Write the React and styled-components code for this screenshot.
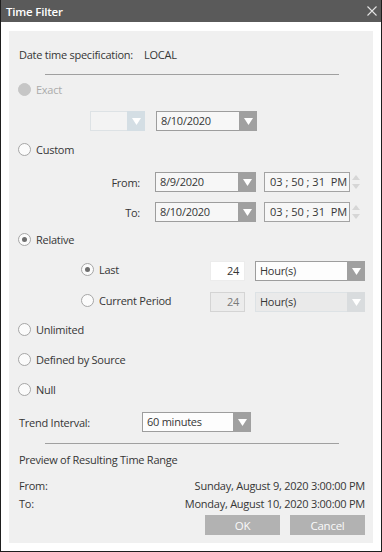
import React from 'react';
import styled, { createGlobalStyle, css } from 'styled-components';

const Global = createGlobalStyle`
  html, body { margin: 0; padding: 0; background: #fff; }
  body {
    font-family: "Open Sans", "Noto Sans", sans-serif;
    font-size: 11px;
    letter-spacing: -0.25px;
    color: #363636;
  }
`;

const Window = styled.div`
  width: 382px;
  height: 552px;
  box-sizing: border-box;
  border: 1px solid #1e1e1e;
  border-top: none;
  background: #fff;
  display: flex;
  flex-direction: column;
`;

const TitleBar = styled.div`
  height: 22px;
  flex: none;
  background: #5a5a5a;
  color: #fff;
  display: flex;
  align-items: center;
  justify-content: space-between;
  padding: 0 4px 0 5px;
  font-size: 11.5px;
  font-weight: 600;
  letter-spacing: -0.2px;
`;

const Body = styled.div`
  flex: 1;
  padding: 9px 9px 8px 8px;
  display: flex;
`;

const Panel = styled.div`
  flex: 1;
  background: #f0f0f0;
  padding: 0 8px 0 9px;
  display: flex;
  flex-direction: column;
`;

const Row = styled.div`
  height: ${p => p.$h}px;
  flex: none;
  display: flex;
  align-items: center;
  padding-left: ${p => p.$indent || 0}px;
  gap: ${p => p.$gap || 0}px;
  justify-content: ${p => p.$justify || 'flex-start'};
  margin-top: ${p => p.$mt || 0}px;
`;

const Separator = styled.div`
  width: 294px;
  height: 1px;
  background: #a0a0a0;
  align-self: center;
  flex: none;
  margin-top: ${p => p.$mt || 0}px;
`;

const Text = styled.span`
  color: ${p => (p.$disabled ? '#ababab' : '#363636')};
  white-space: nowrap;
`;

const Label = styled.span`
  width: ${p => p.$w}px;
  text-align: ${p => p.$align || 'left'};
  box-sizing: border-box;
  flex: none;
  white-space: nowrap;
`;

const RadioWrap = styled.label`
  display: flex;
  align-items: center;
  gap: 5px;
  width: ${p => (p.$w ? `${p.$w}px` : 'auto')};
  margin-bottom: ${p => p.$lift || 0}px;
  flex: none;
`;

const RadioCircle = styled.span`
  width: 13px;
  height: 13px;
  border-radius: 50%;
  box-sizing: border-box;
  border: 1px solid ${p => (p.$disabled ? '#c6c6c6' : '#a6a6a6')};
  background: ${p => (p.$disabled ? '#c6c6c6' : '#fbfbfb')};
  position: relative;
  flex: none;
  ${p =>
    p.$checked &&
    css`
      &::after {
        content: '';
        position: absolute;
        left: 3px;
        top: 3px;
        width: 5px;
        height: 5px;
        border-radius: 50%;
        background: #6e6e6e;
      }
    `}
`;

const comboBg = {
  normal: '#f7f7f7',
  white: '#fdfdfd',
  empty: '#f3f3f3',
  disabled: '#eaeaea',
};

const Combo = styled.div`
  width: ${p => p.$w}px;
  height: 20px;
  box-sizing: border-box;
  border: 1px solid ${p => (p.$variant === 'empty' || p.$variant === 'disabled' ? '#dde2e5' : '#9d9d9d')};
  background: ${p => comboBg[p.$variant]};
  display: flex;
  flex: none;
`;

const ComboText = styled.span`
  flex: 1;
  padding-left: 4px;
  line-height: 18px;
  color: #363636;
  white-space: nowrap;
  overflow: hidden;
`;

const ComboArrow = styled.span`
  width: 18px;
  flex: none;
  margin: -1px -1px -1px 0;
  background: ${p =>
    p.$variant === 'empty' ? '#d4dee4' : p.$variant === 'disabled' ? '#d9dcde' : '#a0a0a0'};
  display: flex;
  align-items: center;
  justify-content: center;
`;

const NumBox = styled.div`
  width: 35px;
  height: 20px;
  box-sizing: border-box;
  border: 1px solid ${p => (p.$disabled ? '#d4d4d4' : '#ececec')};
  background: ${p => (p.$disabled ? '#ececec' : '#ffffff')};
  color: ${p => (p.$disabled ? '#7a7a7a' : '#363636')};
  text-align: right;
  padding-right: 5px;
  line-height: 18px;
  flex: none;
`;

const TimeBox = styled.div`
  width: 86px;
  height: 20px;
  box-sizing: border-box;
  border: 1px solid #a3a3a3;
  background: #f7f7f7;
  padding-left: 5px;
  line-height: 18px;
  letter-spacing: 0;
  white-space: pre;
  flex: none;
`;

const Spinner = styled.div`
  display: flex;
  flex-direction: column;
  gap: 4px;
  flex: none;
`;

const Button = styled.button`
  width: 75px;
  height: 20px;
  border: none;
  background: #b2b2b2;
  color: #fafafa;
  font-family: inherit;
  font-size: 11.5px;
  letter-spacing: inherit;
  padding: 0;
`;

const Triangle = ({ color = '#fff', up = false, w = 9, h = 7 }) => (
  <svg width={w} height={h} viewBox="0 0 10 7" preserveAspectRatio="none">
    <path d={up ? 'M0 7 L5 0 L10 7 Z' : 'M0 0 L10 0 L5 7 Z'} fill={color} />
  </svg>
);

const Radio = ({ label, checked, disabled, w, lift }) => (
  <RadioWrap $w={w} $lift={lift}>
    <RadioCircle $checked={checked} $disabled={disabled} />
    <Text $disabled={disabled}>{label}</Text>
  </RadioWrap>
);

const Dropdown = ({ value, w, variant = 'normal' }) => (
  <Combo $w={w} $variant={variant}>
    <ComboText>{value}</ComboText>
    <ComboArrow $variant={variant}>
      <Triangle />
    </ComboArrow>
  </Combo>
);

const Time = () => (
  <>
    <TimeBox>{'03 ; 50 ; 31  PM'}</TimeBox>
    <Spinner>
      <Triangle up color="#d6d6d6" w={8} h={5} />
      <Triangle color="#d6d6d6" w={8} h={5} />
    </Spinner>
  </>
);

export default function App() {
  return (
    <>
      <Global />
      <Window>
        <TitleBar>
          <span>Time Filter</span>
          <svg width="10" height="10" viewBox="0 0 10 10">
            <path d="M0.5 0.5 L9.5 9.5 M9.5 0.5 L0.5 9.5" stroke="#e4e4e4" strokeWidth="1.1" />
          </svg>
        </TitleBar>
        <Body>
          <Panel>
            <Row $h={16} $mt={15} $indent={1}>
              <Label $w={125}>Date time specification:</Label>
              <Text>LOCAL</Text>
            </Row>
            <Separator $mt={12} />
            <Row $h={16} $mt={6}>
              <Radio label="Exact" disabled />
            </Row>
            <Row $h={20} $mt={14} $indent={72} $gap={11}>
              <Dropdown w={55} variant="empty" />
              <Dropdown w={101} value="8/10/2020" />
            </Row>
            <Row $h={16} $mt={10}>
              <Radio label="Custom" />
            </Row>
            <Row $h={20} $mt={15}>
              <Label $w={122} $align="right">From:</Label>
              <Row $h={20} $indent={15} $gap={8}>
                <Dropdown w={101} value="8/9/2020" />
                <Row $h={20} $gap={2}>
                  <Time />
                </Row>
              </Row>
            </Row>
            <Row $h={20} $mt={10}>
              <Label $w={122} $align="right">To:</Label>
              <Row $h={20} $indent={15} $gap={8}>
                <Dropdown w={101} value="8/10/2020" />
                <Row $h={20} $gap={2}>
                  <Time />
                </Row>
              </Row>
            </Row>
            <Row $h={16} $mt={9}>
              <Radio label="Relative" checked />
            </Row>
            <Row $h={20} $mt={14} $indent={63}>
              <Radio label="Last" checked w={129} lift={3} />
              <NumBox>24</NumBox>
              <Row $h={20} $indent={10}>
                <Dropdown w={110} value="Hour(s)" variant="white" />
              </Row>
            </Row>
            <Row $h={20} $mt={11} $indent={63}>
              <Radio label="Current Period" w={129} lift={3} />
              <NumBox $disabled>24</NumBox>
              <Row $h={20} $indent={10}>
                <Dropdown w={110} value="Hour(s)" variant="disabled" />
              </Row>
            </Row>
            <Row $h={16} $mt={9}>
              <Radio label="Unlimited" />
            </Row>
            <Row $h={16} $mt={14}>
              <Radio label="Defined by Source" />
            </Row>
            <Row $h={16} $mt={14}>
              <Radio label="Null" />
            </Row>
            <Row $h={20} $mt={15} $indent={1}>
              <Label $w={123}>Trend Interval:</Label>
              <Dropdown w={109} value="60 minutes" variant="white" />
            </Row>
            <Separator $mt={11} />
            <Row $h={16} $mt={7} $indent={1}>
              <Text>Preview of Resulting Time Range</Text>
            </Row>
            <Row $h={16} $mt={10} $indent={1} $justify="space-between">
              <Text>From:</Text>
              <Text>Sunday, August 9, 2020 3:00:00 PM</Text>
            </Row>
            <Row $h={16} $mt={2} $indent={1} $justify="space-between">
              <Text>To:</Text>
              <Text>Monday, August 10, 2020 3:00:00 PM</Text>
            </Row>
            <Row $h={20} $mt={4} $justify="flex-end" $gap={10}>
              <Button>OK</Button>
              <Button>Cancel</Button>
            </Row>
          </Panel>
        </Body>
      </Window>
    </>
  );
}
